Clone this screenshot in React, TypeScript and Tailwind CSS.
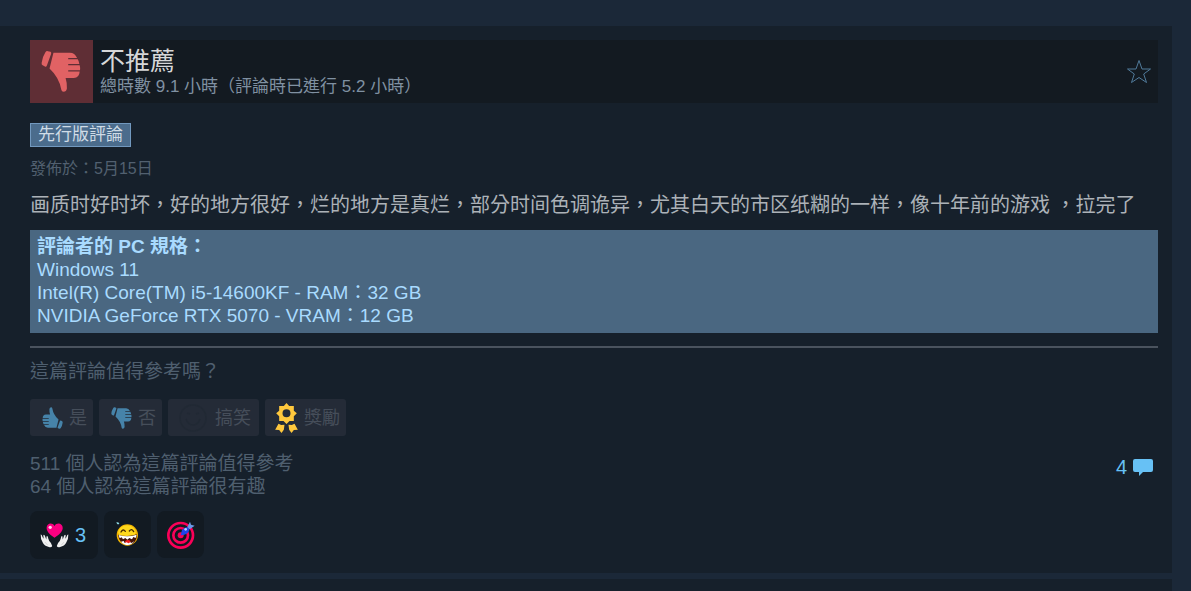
import type { ReactNode } from "react"

const THUMB_PATH =
  "M53 34 L61 36 Q64 38 63 42 L50 78 Q48 83 44 81 L37 77 Q33 75 34 69 Q36 52 45 38 Q48 33 53 34 Z M70 39 H120 Q135 39 142 55 H115 V59 H144 Q148 65 149 73 H115 V77 H150 Q152 84 151 92 H115 V96 H150 Q149 115 132 116 H107 Q112 132 111 148 Q109 158 101 158 Q95 158 94 152 Q88 115 58 87 Z"

const Thumb = ({ className }: { className: string }) => (
  <svg viewBox="32 32 122 128" fill="currentColor" className={className} aria-hidden="true">
    <path d={THUMB_PATH} />
  </svg>
)

const FunnyIcon = () => (
  <svg viewBox="0 0 28 28" fill="none" stroke="#212934" className="h-7 w-7" aria-hidden="true">
    <circle cx="14" cy="14" r="13" strokeWidth="1.5" />
    <path d="M7 15 Q9 21 14 21 Q19 21 21 15" strokeWidth="1.5" />
    <path d="M8 9 L11 10 M20 9 L17 10" strokeWidth="1.5" />
  </svg>
)

const AwardIcon = () => (
  <svg viewBox="0 0 68 90" fill="#ffc83d" className="h-[30px] w-[23px]" aria-hidden="true">
    <path
      fillRule="evenodd"
      d="M34 0 L42 9 L56 9 L56 23 L65 31 L56 40 L56 54 L43 54 L34 63 L25 54 L12 54 L12 40 L3 31 L12 23 L12 9 L26 9 Z M34 19 A12 12 0 1 0 34 43 A12 12 0 1 0 34 19 Z"
    />
    <path d="M10 62 L18 66 L28 65 L26 80 L19 90 L12 81 L0 80 Z" />
    <path d="M58 62 L50 66 L40 65 L42 80 L49 90 L56 81 L68 80 Z" />
  </svg>
)

const HeartHands = () => (
  <svg viewBox="0 0 86 76" className="h-[25px] w-[29px]" aria-hidden="true">
    <path
      d="M43 45 C32 37 19 27 19 15 C19 1 36 -3 43 9 C50 -3 68 1 68 15 C68 27 54 37 43 45 Z"
      fill="#fb0081"
    />
    <circle cx="30" cy="13" r="5" fill="#ffd5ea" />
    <g fill="#f0f0f0">
      <path d="M1 35 Q4 33 7 43 L10 48 L9 37 Q12 33 15 42 L18 50 L19 40 Q23 37 24 47 L27 55 Q34 61 36 70 Q34 75 26 73 Q12 70 8 61 Q0 50 1 35 Z" />
      <path d="M85 35 Q82 33 79 43 L76 48 L77 37 Q74 33 71 42 L68 50 L67 40 Q63 37 62 47 L59 55 Q52 61 50 70 Q52 75 60 73 Q74 70 78 61 Q86 50 85 35 Z" />
    </g>
    <path
      d="M14 58 L22 67 M72 58 L64 67"
      fill="none"
      stroke="#c4c4c4"
      strokeWidth="2"
    />
  </svg>
)

const Laugh = () => (
  <svg viewBox="0 0 84 84" className="h-7 w-7" aria-hidden="true">
    <circle cx="40" cy="42" r="32" fill="#f3b400" />
    <ellipse cx="39" cy="34" rx="26" ry="21" fill="#ffd81c" />
    <path
      d="M21 33 Q27 22 34 31 M46 30 Q53 21 59 32"
      fill="none"
      stroke="#4a2c00"
      strokeWidth="4"
      strokeLinecap="round"
    />
    <path d="M12 41 Q41 49 69 40 Q68 71 42 72 Q16 70 12 41 Z" fill="#451408" />
    <path
      d="M14 42 Q41 50 68 41 L65 51 L58 48 L54 55 L46 51 L40 56 L34 51 L27 55 L23 49 L17 52 Z"
      fill="#fff"
    />
    <path d="M33 61 Q42 53 50 61 L47 67 H35 Z" fill="#ef2020" />
    <path d="M21 62 L29 60 L32 66 L38 64 L43 67 L49 64 L53 66 L61 60 Q53 72 42 72 Q29 72 21 62 Z" fill="#fff" />
    <path d="M7 4 Q14 3 16 8 Q13 12 9 8 Z" fill="#8fdbe5" />
  </svg>
)

const Target = () => (
  <svg viewBox="0 0 84 84" className="h-7 w-7" aria-hidden="true">
    <g fill="none" stroke="#fa0058" strokeWidth="8">
      <circle cx="41" cy="43" r="37" />
      <circle cx="41" cy="43" r="22" />
    </g>
    <circle cx="41" cy="43" r="9" fill="#fa0058" />
    <path d="M41 43 L45 27 Q54 16 66 18 Q70 31 59 38 Q51 43 41 43 Z" fill="#2044ea" />
    <path d="M61 18 L69 2 L72 11 L83 14 L68 25 Z" fill="#6a9ae8" />
    <circle cx="56" cy="25" r="4" fill="#b5d1ff" />
  </svg>
)

const VoteButton = ({
  icon,
  label,
  className,
}: {
  icon: ReactNode
  label: string
  className: string
}) => (
  <button
    type="button"
    className={`flex h-[37px] items-center rounded-[3px] bg-[#242b37] text-lg leading-6 text-[#464e5a] ${className}`}
  >
    {icon}
    <span>{label}</span>
  </button>
)

const ReviewHeader = () => (
  <header className="flex h-[63px] items-center bg-[#131a21]">
    <div className="flex h-[63px] w-[63px] items-center bg-[#5f2e35] pl-[11px]">
      <Thumb className="h-[43px] w-10 text-[#e16264]" />
    </div>
    <div className="ml-[7px] flex-1">
      <h1 className="text-[25px] leading-[30px] text-[#d6d7d8]">不推薦</h1>
      <p className="text-[17px] leading-[22px] text-[#8091a2]">
        總時數 9.1 小時（評論時已進行 5.2 小時）
      </p>
    </div>
    <button type="button" aria-label="收藏" className="mr-[6px]">
      <svg viewBox="0 0 26 26" fill="none" stroke="#507a9a" className="h-[26px] w-[26px]">
        <path d="M13 1.5 L16 10 H24.5 L17.7 15 L20.5 23.5 L13 18.5 L5.5 23.5 L8.3 15 L1.5 10 H10 Z" />
      </svg>
    </button>
  </header>
)

const App = () => {
  return (
    <div
      lang="zh-Hant"
      className="flex min-h-screen flex-col bg-[#1b2838] pt-[26px] pr-[19px] font-['Liberation_Sans','Noto_Sans_CJK_TC',sans-serif]"
    >
      <article className="bg-[#16202b] py-[14px] pr-[14px] pl-[30px]">
        <ReviewHeader />

        <div className="mt-5 flex">
          <span className="flex h-6 items-center border border-[#7299bf] bg-[#4b6c8c] px-[7px] text-[17px] leading-[22px] text-[#d0dce6]">
            先行版評論
          </span>
        </div>
        <p className="mt-[11px] text-base leading-[22px] text-[#526070]">發佈於：5月15日</p>
        <p className="mt-[11px] text-xl leading-7 text-[#acb2b8]">
          画质时好时坏，好的地方很好，烂的地方是真烂，部分时间色调诡异，尤其白天的市区纸糊的一样，像十年前的游戏 ，拉完了
        </p>

        <section className="mt-[11px] bg-[#4a6781] px-[7px] pt-[5px] pb-[6px] text-[19px] leading-[23px] text-[#a9dbff]">
          <h2 className="font-bold">評論者的 PC 規格：</h2>
          <p>Windows 11</p>
          <p>Intel(R) Core(TM) i5-14600KF - RAM：32 GB</p>
          <p>NVIDIA GeForce RTX 5070 - VRAM：12 GB</p>
        </section>

        <hr className="mt-[13px] border-t-2 border-[#4a535e]" />

        <p className="mt-3 text-[19px] leading-6 text-[#4f5f6f]">這篇評論值得參考嗎？</p>
        <div className="mt-[15px] flex gap-[6px]">
          <VoteButton
            className="gap-[6px] px-3 pr-[6px]"
            label="是"
            icon={<Thumb className="h-[22px] w-[21px] rotate-180 text-[#4683a9]" />}
          />
          <VoteButton
            className="gap-[6px] pr-[6px] pl-3"
            label="否"
            icon={<Thumb className="h-[22px] w-[21px] text-[#4683a9]" />}
          />
          <VoteButton className="gap-2 pr-2 pl-[11px]" label="搞笑" icon={<FunnyIcon />} />
          <VoteButton className="gap-[6px] pr-[6px] pl-[10px]" label="獎勵" icon={<AwardIcon />} />
        </div>

        <div className="mt-4 flex justify-between">
          <div className="text-[19px] leading-[23px] text-[#4f5f6f]">
            <p>511 個人認為這篇評論值得參考</p>
            <p>64 個人認為這篇評論很有趣</p>
          </div>
          <a
            href="#comments"
            aria-label="4 則留言"
            className="mt-[3px] mr-[5px] flex h-6 items-center gap-[6px] text-xl leading-6 text-[#67c1f5]"
          >
            4
            <svg viewBox="0 0 20 17" fill="currentColor" className="h-[17px] w-5" aria-hidden="true">
              <path d="M2 0 H18 Q20 0 20 2 V11 Q20 13 18 13 H10 L6 17 V13 H2 Q0 13 0 11 V2 Q0 0 2 0 Z" />
            </svg>
          </a>
        </div>

        <div className="mt-[13px] flex items-start gap-[6px]">
          <button
            type="button"
            className="flex h-12 items-center gap-[6px] rounded-lg bg-[#121a22] pr-3 pl-[10px] text-xl leading-6 text-[#67c1f5]"
          >
            <HeartHands />
            3
          </button>
          <button
            type="button"
            aria-label="大笑"
            className="flex h-[47px] w-[47px] items-center justify-center rounded-lg bg-[#121a22]"
          >
            <Laugh />
          </button>
          <button
            type="button"
            aria-label="正中紅心"
            className="flex h-[47px] w-[47px] items-center justify-center rounded-lg bg-[#121a22]"
          >
            <Target />
          </button>
        </div>
      </article>

      {/* top edge of the next review */}
      <div className="mt-[6px] flex-1 bg-[#16202b]" />
    </div>
  )
}

export default App
